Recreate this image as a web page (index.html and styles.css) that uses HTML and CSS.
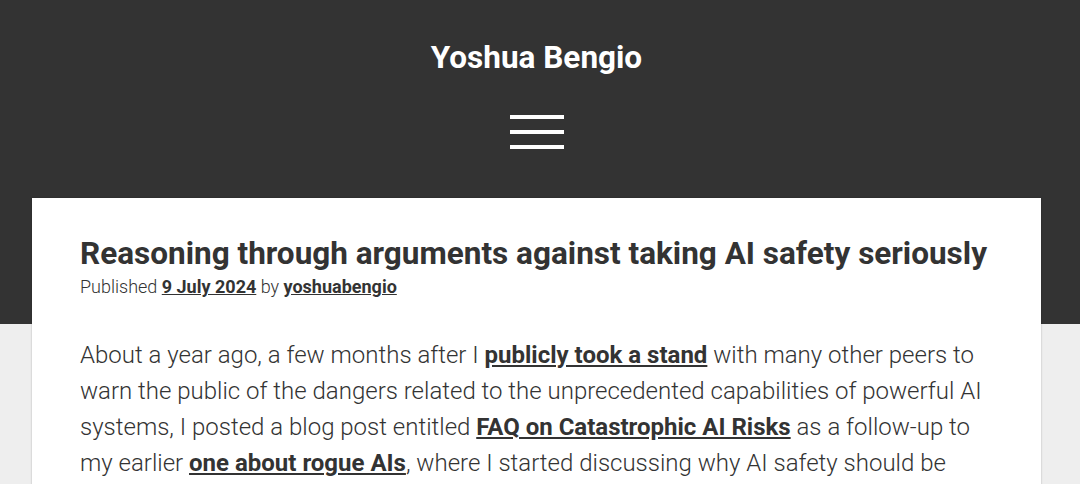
FILE: index.html
```html
<!DOCTYPE html>
<html lang="en">
<head>
<meta charset="utf-8">
<title>Yoshua Bengio</title>
<link rel="stylesheet" href="styles.css">
</head>
<body>
<div class="page">
  <header class="site-header">
    <h1 class="site-title">Yoshua Bengio</h1>
    <button class="menu-toggle" aria-label="Menu">
      <span class="bar"></span><span class="bar"></span><span class="bar"></span>
    </button>
  </header>
  <main class="content">
    <article class="post">
      <h2 class="post-title">Reasoning through arguments against taking AI safety seriously</h2>
      <p class="post-meta">Published <a href="#">9 July 2024</a> by <a href="#">yoshuabengio</a></p>
      <p class="post-body">About a year ago, a few months after I <a href="#">publicly took a stand</a> with many other peers to warn the public of the dangers related to the unprecedented capabilities of powerful AI systems, I posted a blog post entitled <a href="#">FAQ on Catastrophic AI Risks</a> as a follow-up to my earlier <a href="#">one about rogue AIs</a>, where I started discussing why AI safety should be taken seriously.</p>
    </article>
  </main>
</div>
</body>
</html>
```
FILE: styles.css
```css
html, body {
  margin: 0;
  padding: 0;
}
body {
  font-family: Roboto, "Liberation Sans", sans-serif;
  color: #333;
  background: linear-gradient(#333 0, #333 324px, #eee 324px, #eee 100%);
  min-height: 484px;
}
.page {
  margin-right: 7px;
}
.site-header {
  display: flex;
  flex-direction: column;
  align-items: center;
  padding-top: 38px;
}
.site-title {
  margin: 0;
  font-size: 31.5px;
  font-weight: 700;
  color: #fff;
  line-height: 40px;
}
.menu-toggle {
  margin-top: 37px;
  width: 54px;
  height: 34px;
  padding: 0;
  border: 0;
  background: none;
  display: flex;
  flex-direction: column;
  justify-content: space-between;
}
.bar {
  display: block;
  height: 4px;
  width: 54px;
  background: #fff;
}
.content {
  margin: 49px 32px 0 32px;
}
.post {
  background: #fff;
  padding: 36px 48px 20px;
  box-shadow: 0 0 2px rgba(0,0,0,0.25);
}
.post-title {
  margin: 0;
  font-size: 31.5px;
  line-height: 40px;
  font-weight: 700;
  color: #333;
}
.post-meta {
  margin: 0;
  font-size: 18px;
  line-height: 26px;
  font-weight: 300;
  color: #333;
}
.post-meta a, .post-body a {
  color: #333;
  font-weight: 700;
  text-decoration: underline;
}
.post-body {
  margin: 37px 0 0;
  font-size: 24px;
  line-height: 36px;
  font-weight: 300;
  color: #333;
}
```
